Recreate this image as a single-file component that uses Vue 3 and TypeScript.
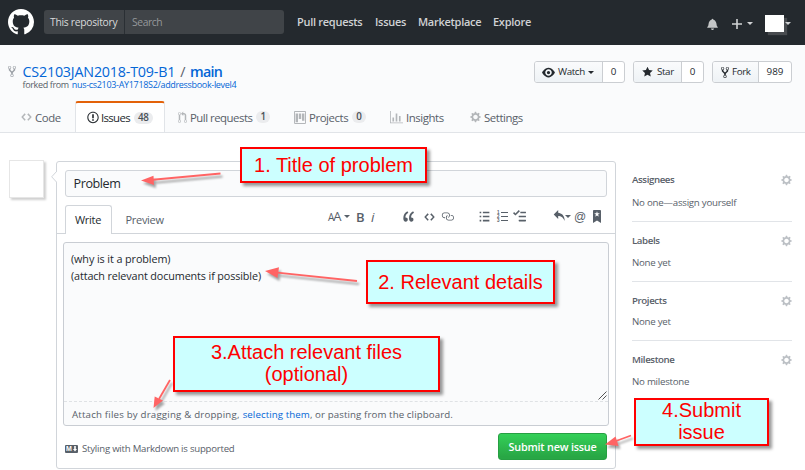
<script setup lang="ts">
interface Icon { w: number; d: string }
const icons: Record<string, Icon> = {
  github: { w: 16, d: 'M8 0C3.58 0 0 3.58 0 8c0 3.54 2.29 6.53 5.47 7.59.4.07.55-.17.55-.38 0-.19-.01-.82-.01-1.49-2.01.37-2.53-.49-2.69-.94-.09-.23-.48-.94-.82-1.13-.28-.15-.68-.52-.01-.53.63-.01 1.08.58 1.23.82.72 1.21 1.87.87 2.33.66.07-.52.28-.87.51-1.07-1.78-.2-3.64-.89-3.64-3.95 0-.87.31-1.59.82-2.15-.08-.2-.36-1.02.08-2.12 0 0 .67-.21 2.2.82.64-.18 1.32-.27 2-.27.68 0 1.36.09 2 .27 1.53-1.04 2.2-.82 2.2-.82.44 1.1.16 1.92.08 2.12.51.56.82 1.27.82 2.15 0 3.07-1.87 3.75-3.65 3.95.29.25.54.73.54 1.48 0 1.07-.01 1.93-.01 2.2 0 .21.15.46.55.38A8.013 8.013 0 0 0 16 8c0-4.42-3.58-8-8-8z' },
  fork: { w: 10, d: 'M8 1a1.993 1.993 0 0 0-1 3.72V6L5 8 3 6V4.72A1.993 1.993 0 0 0 2 1a1.993 1.993 0 0 0-1 3.72V6.5l3 3v1.78A1.993 1.993 0 0 0 5 15a1.993 1.993 0 0 0 1-3.72V9.5l3-3V4.72A1.993 1.993 0 0 0 8 1zM2 4.2C1.34 4.2.8 3.65.8 3c0-.65.55-1.2 1.2-1.2.65 0 1.2.55 1.2 1.2 0 .65-.55 1.2-1.2 1.2zm3 10c-.66 0-1.2-.55-1.2-1.2 0-.65.55-1.2 1.2-1.2.65 0 1.2.55 1.2 1.2 0 .65-.55 1.2-1.2 1.2zm3-10c-.66 0-1.2-.55-1.2-1.2 0-.65.55-1.2 1.2-1.2.65 0 1.2.55 1.2 1.2 0 .65-.55 1.2-1.2 1.2z' },
  code: { w: 14, d: 'M9.5 3L8 4.5 11.5 8 8 11.5 9.5 13 14 8 9.5 3zm-5 0L0 8l4.5 5L6 11.5 2.5 8 6 4.5 4.5 3z' },
  issue: { w: 14, d: 'M7 2.3c3.14 0 5.7 2.56 5.7 5.7s-2.56 5.7-5.7 5.7A5.71 5.71 0 0 1 1.3 8c0-3.14 2.56-5.7 5.7-5.7zM7 1C3.14 1 0 4.14 0 8s3.14 7 7 7 7-3.14 7-7-3.14-7-7-7zm1 3H6v5h2V4zm0 6H6v2h2v-2z' },
  pull: { w: 12, d: 'M11 11.28V5c-.03-.78-.34-1.47-.94-2.06C9.46 2.35 8.78 2.03 8 2H7V0L4 3l3 3V4h1c.27.02.48.11.69.31.21.2.3.42.31.69v6.28A1.993 1.993 0 0 0 10 15a1.993 1.993 0 0 0 1-3.72zm-1 2.92c-.66 0-1.2-.55-1.2-1.2 0-.65.55-1.2 1.2-1.2.65 0 1.2.55 1.2 1.2 0 .65-.55 1.2-1.2 1.2zM4 3c0-1.11-.89-2-2-2a1.993 1.993 0 0 0-1 3.72v6.56A1.993 1.993 0 0 0 2 15a1.993 1.993 0 0 0 1-3.72V4.72c.59-.34 1-.98 1-1.72zm-.8 10c0 .66-.55 1.2-1.2 1.2-.65 0-1.2-.55-1.2-1.2 0-.65.55-1.2 1.2-1.2.65 0 1.2.55 1.2 1.2zM2 4.2C1.34 4.2.8 3.65.8 3c0-.65.55-1.2 1.2-1.2.65 0 1.2.55 1.2 1.2 0 .65-.55 1.2-1.2 1.2z' },
  project: { w: 15, d: 'M10 12h3V3h-3v9zM6 10h3V3H6v7zM2 14h3V3H2v11zM14 0H1a1 1 0 0 0-1 1v14a1 1 0 0 0 1 1h13a1 1 0 0 0 1-1V1a1 1 0 0 0-1-1zM1.2 1.2v13.6h12.6V1.2z' },
  graph: { w: 16, d: 'M16 14v1H0V0h1v14h15zM5 13H3V8h2v5zm4 0H7V3h2v10zm4 0h-2V6h2v7z' },
  gear: { w: 14, d: 'M14 8.77v-1.6l-1.94-.64-.45-1.09.88-1.84-1.13-1.13-1.81.91-1.09-.45-.69-1.92h-1.6l-.63 1.94-1.11.45-1.84-.88-1.13 1.13.91 1.81-.45 1.09L0 7.23v1.59l1.94.64.45 1.09-.88 1.84 1.13 1.13 1.81-.91 1.09.45.69 1.92h1.59l.63-1.94 1.11-.45 1.84.88 1.13-1.13-.92-1.81.47-1.09L14 8.75v.02zM7 11c-1.66 0-3-1.34-3-3s1.34-3 3-3 3 1.34 3 3-1.34 3-3 3z' },
  eye: { w: 16, d: 'M8.06 2C3 2 0 8 0 8s3 6 8.06 6C13 14 16 8 16 8s-3-6-7.94-6zM8 12c-2.2 0-4-1.78-4-4 0-2.2 1.8-4 4-4 2.22 0 4 1.8 4 4 0 2.22-1.78 4-4 4zm2-4c0 1.11-.89 2-2 2-1.11 0-2-.89-2-2 0-1.11.89-2 2-2 1.11 0 2 .89 2 2z' },
  star: { w: 14, d: 'M14 6l-4.9-.64L7 1 4.9 5.36 0 6l3.6 3.26L2.67 14 7 11.67 11.33 14l-.93-4.74z' },
  bell: { w: 14, d: 'M14 12v1H0v-1l.73-.58c.77-.77.81-2.55 1.19-4.42C2.69 3.23 6 2 6 2c0-.55.45-1 1-1s1 .45 1 1c0 0 3.39 1.23 4.16 5 .38 1.88.42 3.66 1.19 4.42l.66.58H14zm-7 4c1.11 0 2-.89 2-2H5c0 1.11.89 2 2 2z' },
  quote: { w: 14, d: 'M6.16 3.5C3.73 5.06 2.55 6.67 2.55 9.36c.16-.05.3-.05.44-.05 1.27 0 2.5.86 2.5 2.41 0 1.61-1.03 2.61-2.5 2.61-1.9 0-2.99-1.52-2.99-4.25 0-3.8 1.75-6.53 5.02-8.42L6.16 3.5zm7 0c-2.43 1.56-3.61 3.17-3.61 5.86.16-.05.3-.05.44-.05 1.27 0 2.5.86 2.5 2.41 0 1.61-1.03 2.61-2.5 2.61-1.89 0-2.98-1.52-2.98-4.25 0-3.8 1.75-6.53 5.02-8.42l1.14 1.84h-.01z' },
  link: { w: 16, d: 'M4 9h1v1H4c-1.5 0-3-1.69-3-3.5S2.55 3 4 3h4c1.45 0 3 1.69 3 3.5 0 1.41-.91 2.72-2 3.25V8.59c.58-.45 1-1.27 1-2.09C10 5.22 8.98 4 8 4H4c-.98 0-2 1.22-2 2.5S3 9 4 9zm9-3h-1v1h1c1 0 2 1.22 2 2.5S13.98 12 13 12H9c-.98 0-2-1.22-2-2.5 0-.83.42-1.64 1-2.09V6.25c-1.09.53-2 1.84-2 3.25C6 11.31 7.55 13 9 13h4c1.45 0 3-1.69 3-3.5S14.5 6 13 6z' },
  list: { w: 12, d: 'M0 2h2v2H0zM4 2h8v2H4zM0 7h2v2H0zM4 7h8v2H4zM0 12h2v2H0zM4 12h8v2H4z' },
  tasks: { w: 16, d: 'M15.41 9H7.59C7 9 7 8.59 7 8c0-.59 0-1 .59-1h7.81c.59 0 .59.41.59 1 0 .59 0 1-.59 1h.01zM9.59 4C9 4 9 3.59 9 3c0-.59 0-1 .59-1h5.81c.59 0 .59.41.59 1 0 .59 0 1-.59 1H9.59zM0 3.91l1.41-1.3L3 4.2 7.09 0 8.5 1.41 3 6.91l-3-3zM7.59 12h7.81c.59 0 .59.41.59 1 0 .59 0 1-.59 1H7.59C7 14 7 13.59 7 13c0-.59 0-1 .59-1z' },
  reply: { w: 14, d: 'M6 3.5c3.92.44 8 3.125 8 10-2.312-5.062-4.75-6-8-6V11L.5 5.5 6 0v3.5z' },
  bookmark: { w: 10, d: 'M9 0H1C.27 0 0 .27 0 1v15l5-3.09L10 16V1c0-.73-.27-1-1-1zm-.78 4.25L6.36 5.61l.72 2.16c.06.22-.02.28-.2.17L5 6.6 3.12 7.94c-.19.11-.25.05-.2-.17l.72-2.16-1.86-1.36c-.17-.16-.14-.23.09-.23l2.3-.03.7-2.16h.25l.7 2.16 2.3.03c.23 0 .27.08.09.23h.01z' },
}
const box = (n: string) => `0 0 ${icons[n].w} 16`

const nav = [
  { t: 'Pull requests', c: 'n1' }, { t: 'Issues', c: 'n2' },
  { t: 'Marketplace', c: 'n3' }, { t: 'Explore', c: 'n4' },
]
const tabs = [
  { t: 'Code', icon: 'code', c: 't1' },
  { t: 'Issues', icon: 'issue', c: 't2 active', n: 48 },
  { t: 'Pull requests', icon: 'pull', c: 't3', n: 1 },
  { t: 'Projects', icon: 'project', c: 't4', n: 0 },
  { t: 'Insights', icon: 'graph', c: 't5' },
  { t: 'Settings', icon: 'gear', c: 't6' },
]
const actions = [
  { t: 'Watch', icon: 'eye', n: 0, c: 'watch', caret: true },
  { t: 'Star', icon: 'star', n: 0, c: 'star', caret: false },
  { t: 'Fork', icon: 'fork', n: 989, c: 'forks', caret: false },
]
const side = [
  { t: 'Assignees', v: 'No one—assign yourself', c: 's1' },
  { t: 'Labels', v: 'None yet', c: 's2' },
  { t: 'Projects', v: 'None yet', c: 's3' },
  { t: 'Milestone', v: 'No milestone', c: 's4' },
]
const arrows = [
  { line: 'M220.5 173.5L150 180', head: '141,180.5 153.5,175.8 154,185' },
  { line: 'M357 281L275 272.3', head: '265,271 279,267.3 277.5,278' },
  { line: 'M170 380L159 399', head: '153.5,408 154.7,396.5 163,400.5' },
  { line: 'M631 435.5L616 441', head: '605,444.5 615.5,436.5 618.5,446' },
]
</script>

<template>
  <div class="page">
    <header class="topbar">
      <svg class="logo" :viewBox="box('github')"><path :d="icons.github.d" /></svg>
      <div class="search"><span class="scope">This repository</span><span class="query">Search</span></div>
      <nav class="nav"><a v-for="n in nav" :key="n.t" :class="n.c">{{ n.t }}</a></nav>
      <div class="user">
        <svg class="bell" :viewBox="box('bell')"><path :d="icons.bell.d" /></svg>
        <svg class="plus" viewBox="0 0 10 10"><path d="M4.2 0h1.6v4.2H10v1.6H5.8V10H4.2V5.8H0V4.2h4.2z" /></svg>
        <i class="caret"></i>
        <span class="avatar-sm"></span>
        <i class="caret"></i>
      </div>
    </header>

    <section class="repohead">
      <div class="titlebar">
        <svg class="repoicon" :viewBox="box('fork')"><path :d="icons.fork.d" /></svg>
        <div class="names">
          <h1><a class="owner">CS2103JAN2018-T09-B1</a><span class="slash">/</span><a class="repo">main</a></h1>
          <p class="forked"><span>forked from</span><a>nus-cs2103-AY1718S2/addressbook-level4</a></p>
        </div>
        <ul class="actions">
          <li v-for="a in actions" :key="a.t" :class="a.c">
            <span class="act">
              <svg :viewBox="box(a.icon)"><path :d="icons[a.icon].d" /></svg><span>{{ a.t }}</span><i v-if="a.caret" class="caret"></i>
            </span>
            <span class="num">{{ a.n }}</span>
          </li>
        </ul>
      </div>
      <nav class="tabs">
        <a v-for="t in tabs" :key="t.t" :class="t.c">
          <svg :viewBox="box(t.icon)"><path fill-rule="evenodd" :d="icons[t.icon].d" /></svg><span class="lbl">{{ t.t }}</span>
          <b v-if="t.n !== undefined">{{ t.n }}</b>
        </a>
      </nav>
    </section>

    <main class="content">
      <div class="avatar"></div>
      <form class="form" @submit.prevent>
        <svg class="notch" viewBox="0 0 6 12"><path d="M6 0L.7 5.8 6 11.6" /></svg>
        <div class="title-input">Problem</div>
        <div class="editor-tabs">
          <span class="write">Write</span><span class="preview">Preview</span>
          <div class="tools">
            <span class="size"><small>A</small>A</span><i class="caret"></i><span class="bold">B</span><span class="ital">i</span>
            <svg class="quote" :viewBox="box('quote')"><path :d="icons.quote.d" /></svg>
            <svg class="codei" :viewBox="box('code')"><path :d="icons.code.d" /></svg>
            <svg class="link" :viewBox="box('link')"><path :d="icons.link.d" /></svg>
            <svg class="list" :viewBox="box('list')"><path :d="icons.list.d" /></svg>
            <span class="numbered"><span v-for="n in 3" :key="n"><em>{{ n }}</em><i></i></span></span>
            <svg class="tasks" :viewBox="box('tasks')"><path :d="icons.tasks.d" /></svg>
            <svg class="reply" :viewBox="box('reply')"><path :d="icons.reply.d" /></svg><i class="caret"></i>
            <span class="at">@</span>
            <svg class="bookmark" :viewBox="box('bookmark')"><path fill-rule="evenodd" :d="icons.bookmark.d" /></svg>
          </div>
        </div>
        <div class="editor">
          <div class="text">
            <p class="l1">(why is it a problem)</p>
            <p class="l2">(attach relevant documents if possible)</p>
            <svg class="grip" viewBox="0 0 9 9"><path d="M.5 8.5l8-8M4.5 8.5l4-4" /></svg>
          </div>
          <div class="attach"><span class="a1">Attach files by dragging &amp; dropping,</span><a>selecting them</a><span class="a2">, or pasting from the clipboard.</span></div>
        </div>
        <div class="bottom">
          <span class="md">M<svg viewBox="0 0 4 6"><path d="M1.2 0h1.6v3H4L2 5.6 0 3h1.2z" /></svg></span>
          <span class="styling">Styling with Markdown is supported</span>
          <button>Submit new issue</button>
        </div>
      </form>
      <aside class="side">
        <section v-for="s in side" :key="s.t" :class="s.c">
          <div class="sh"><strong>{{ s.t }}</strong><svg :viewBox="box('gear')"><path :d="icons.gear.d" /></svg></div>
          <p>{{ s.v }}</p>
        </section>
      </aside>
    </main>

    <svg class="arrows" viewBox="0 0 805 470">
      <g v-for="a in arrows" :key="a.line"><path :d="a.line" /><polygon :points="a.head" /></g>
    </svg>
    <div class="note note1">1. Title of problem</div>
    <div class="note note2">2. Relevant details</div>
    <div class="note note3">3.Attach relevant files<br />(optional)</div>
    <div class="note note4">4.Submit<br />issue</div>
  </div>
</template>

<style>
body { margin: 0; background: #fff; }
</style>
<style scoped>
* { box-sizing: border-box; }
.page { position: relative; width: 805px; height: 470px; overflow: hidden; background: #fff; color: #24292e; font-family: "Open Sans", "Noto Sans", sans-serif; font-size: 11px; white-space: nowrap; }
svg { fill: currentColor; display: block; flex: none; }
h1, p, ul { margin: 0; padding: 0; font-weight: 400; }
.caret { width: 0; height: 0; border: 3px solid transparent; border-top-color: currentColor; border-bottom: 0; flex: none; }

.topbar { height: 45px; background: #24292e; display: flex; align-items: center; padding-left: 8px; color: #d0d2d4; }
.logo { width: 26px; height: 26px; color: #fff; margin-top: -1px; }
.search { width: 240px; height: 24px; margin: -1px 0 0 10px; background: #404448; border-radius: 3px; display: flex; align-items: center; }
.scope { width: 81px; height: 24px; line-height: 25px; padding-left: 6px; border-right: 1px solid #2a2f34; font-size: 10.3px; letter-spacing: -.27px; font-weight: 500; color: #d9dadb; }
.query { padding-left: 7px; font-size: 10.3px; letter-spacing: -.4px; color: #95989b; }
.nav { display: flex; width: 408px; padding-left: 13px; font-weight: 600; line-height: 16px; margin-top: -1px; letter-spacing: -.28px; }
.n1 { width: 78px; } .n2 { width: 43px; } .n3 { width: 75px; }
.user { display: flex; align-items: center; padding-left: 15px; height: 45px; padding-top: 2px; }
.bell { width: 11px; height: 12px; margin-right: 14px; color: #c4c6c7; }
.plus { width: 10px; height: 10px; margin-right: 5px; }
.avatar-sm { width: 19px; height: 17px; background: #fff; margin: 0 1px 0 12px; box-shadow: 3px 3px 1px #484b4f; }

.repohead { height: 88px; background: #fafbfc; border-bottom: 1px solid #e1e4e8; display: flex; flex-direction: column; }
.titlebar { display: flex; height: 57px; padding-left: 8px; }
.repoicon { width: 8px; height: 13px; margin-top: 20px; color: #9a9fa5; }
.names { flex: 1; padding: 16px 0 0 6.5px; }
h1 { display: flex; height: 20px; line-height: 22px; font-size: 14.3px; color: #0366d6; }
.owner { letter-spacing: -.2px; }
.slash { color: #586069; margin: 0 4.5px 0 5px; }
.repo { font-weight: 600; letter-spacing: -.75px; }
.forked { display: flex; gap: 3px; font-size: 9px; line-height: 12px; color: #586069; letter-spacing: -.35px; margin-top: -2px; }
.forked a { color: #0366d6; letter-spacing: -.32px; }
.actions { list-style: none; display: flex; gap: 8px; padding: 16px 13px 0 0; }
.actions li { display: flex; height: 22px; border: 1px solid #cbced2; border-radius: 3px; font-size: 9.8px; font-weight: 500; line-height: 20px; background: #fff; overflow: hidden; }
.act { display: flex; align-items: center; background: linear-gradient(#fafbfc, #eff3f6 90%); border-right: 1px solid #cbced2; letter-spacing: -.38px; }
.num { flex: 1; text-align: center; font-weight: 500; }
.watch { width: 91px; } .watch .act { width: 68px; padding-left: 7px; gap: 3px; } .watch svg { width: 13px; height: 13px; }
.star { width: 71px; } .star .act { width: 48px; padding-left: 8px; gap: 4px; } .star svg { width: 11px; height: 12px; }
.forks { width: 80px; } .forks .act { width: 46px; padding-left: 8px; gap: 3px; } .forks svg { width: 8px; height: 13px; }

.tabs { display: flex; height: 31px; color: #586069; font-size: 11.4px; letter-spacing: -.43px; }
.tabs a { display: flex; align-items: center; gap: 2px; height: 31px; padding-top: 1px; }
.tabs svg { color: #b3b6b9; margin-right: 1px; }
.tabs b { height: 12px; border-radius: 8px; background: #ebecee; padding: 0 4px; line-height: 12px; font-size: 9.8px; font-weight: 600; letter-spacing: -.2px; margin-left: 2px; color: #4b5259; }
.t1 { width: 75px; padding-left: 21px; } .t1 svg { width: 11px; height: 12px; }
.t2 { width: 90px; padding-left: 11px; } .t2 svg { width: 12px; height: 13px; color: #24292e; }
.tabs .t2 svg { margin-right: 0; color: #24292e; }
.t2 .lbl { letter-spacing: -.65px; }
.active { background: #fff; border: 1px solid #e1e4e8; border-top: 2px solid #e36209; border-bottom: 0; border-radius: 3px 3px 0 0; color: #24292e; position: relative; margin-bottom: -1px; }
.tabs .active { height: 31px; padding-top: 0; }
.t3 { width: 129px; padding-left: 13px; } .t3 svg { width: 9px; height: 13px; }
.t3 .lbl { letter-spacing: -.5px; }
.t4 { width: 96px; } .t4 svg { width: 12px; height: 13px; }
.t5 { width: 80px; } .t5 svg { width: 13px; height: 13px; }
.t6 svg { width: 11px; height: 12px; }

.content { display: flex; align-items: flex-start; padding: 27px 0 0 9px; }
.avatar { width: 35px; height: 38px; border: 1px solid #e6e6e6; background: #fff; box-shadow: 2px 2px 2px #d0d0d0; }
.form { position: relative; width: 560px; height: 308px; margin: 1px 0 0 12px; border: 1px solid #d1d5da; border-radius: 3px; padding-top: 8px; }
.notch { position: absolute; left: -6px; top: 9px; width: 6px; height: 12px; fill: #fff; stroke: #d1d5da; stroke-width: 1; }
.title-input { height: 27px; margin: 0 8px; border: 1px solid #d1d5da; border-radius: 3px; background: #fafbfc; padding-left: 7.5px; line-height: 26px; font-size: 12.6px; letter-spacing: -.42px; }
.editor-tabs { display: flex; height: 37px; padding: 8px 8px 0; border-bottom: 1px solid #d1d5da; }
.write { width: 47px; height: 29px; border: 1px solid #d1d5da; border-bottom: 0; border-radius: 3px 3px 0 0; background: #fff; padding-left: 9px; line-height: 28px; letter-spacing: -.3px; }
.preview { width: 53px; padding-left: 13.5px; line-height: 30px; letter-spacing: -.3px; color: #586069; }
.tools { display: flex; align-items: center; height: 23px; margin-left: 163px; color: #586069; }
.size { font: 500 13px/14px "Open Sans", sans-serif; width: 16px; letter-spacing: -1.2px; }
.size small { font-size: 10px; }
.bold { width: 15px; margin-left: 6px; font: 600 13px/16px "Open Sans", sans-serif; }
.ital { width: 32px; font: italic 500 13.5px/16px "Open Sans", sans-serif; }
.quote { width: 12px; height: 13px; margin-right: 9px; }
.codei { width: 11px; height: 12px; margin-right: 6px; }
.link { width: 13px; height: 13px; margin-right: 25px; }
.list { width: 11px; height: 13px; margin-right: 7px; }
.numbered { width: 16px; }
.numbered span { display: flex; align-items: center; height: 4px; gap: 2px; }
.numbered em { font: 600 4.5px/4px "Liberation Sans", sans-serif; width: 2px; }
.numbered i { width: 7px; height: 1.4px; background: currentColor; }
.tasks { width: 13px; height: 13px; margin-right: 27px; }
.reply { width: 12px; height: 13px; margin-right: 0; }
.at { width: 19px; margin-left: 3px; font: 12px/14px "Liberation Sans", sans-serif; }
.bookmark { width: 8px; height: 13px; }
.editor { margin: 8px 6px 0; height: 184px; border: 1px solid #c9cdd3; border-radius: 3px; background: #fafbfc; }
.text { position: relative; height: 159px; border-bottom: 1px dashed #dfe2e5; padding: 7px 7px; font-size: 10.8px; line-height: 17px; }
.l1 { letter-spacing: -.09px; } .l2 { letter-spacing: -.12px; }
.grip { position: absolute; right: 1px; bottom: 1px; width: 9px; height: 9px; fill: none; stroke: #555; stroke-width: 1; }
.attach { display: flex; padding-left: 8px; line-height: 25px; font-size: 9.7px; color: #586069; }
.a1 { letter-spacing: .19px; margin-right: 3px; } .attach a { color: #0366d6; letter-spacing: .09px; } .a2 { letter-spacing: .1px; }
.bottom { display: flex; align-items: center; padding: 7px 8px 0; }
.md { display: flex; align-items: center; justify-content: center; gap: 1px; width: 13px; height: 8px; border-radius: 1px; background: #586069; color: #fff; font: 700 7px/8px "Liberation Sans", sans-serif; margin-top: 4px; }
.md svg { width: 4px; height: 6px; }
.styling { flex: 1; padding: 4px 0 0 4px; font-size: 9.6px; letter-spacing: -.22px; color: #586069; }
button { width: 109px; height: 27px; border: 1px solid #279f43; border-radius: 3px; background: linear-gradient(#34d058, #28a745 90%); color: #fff; padding: 0; font: 600 10.8px/24px "Open Sans", sans-serif; letter-spacing: -.2px; }

.side { width: 160px; margin-left: 16px; font-size: 9.7px; color: #586069; }
.side section { border-bottom: 1px solid #e1e4e8; height: 60px; padding-top: 12px; }
.side .s1 { height: 62px; padding-top: 13px; }
.side .s3 { height: 59px; }
.side .s4 { border: 0; }
.sh { display: flex; align-items: center; justify-content: space-between; height: 14px; }
.sh strong { font-weight: 600; letter-spacing: -.4px; color: #586069; margin-top: -2px; }
.sh svg { width: 11px; height: 12px; color: #bcc0c5; }
.side p { margin-top: 8px; line-height: 13px; letter-spacing: -.25px; }
.side .s1 p { margin-top: 9px; }
.side .s3 p { margin-top: 7px; }

.arrows { position: absolute; left: 0; top: 0; width: 805px; height: 470px; filter: drop-shadow(2px 3px 1px rgba(0, 0, 0, .35)); }
.arrows path { stroke: #ff6464; stroke-width: 1.8; fill: none; }
.arrows polygon { fill: #ff6464; }
.note { position: absolute; background: #cff; border: 2px solid #f00; color: #f00; font: 20px/22px "Liberation Sans", Arial, sans-serif; text-align: center; box-shadow: 3px 3px 3px rgba(0, 0, 0, .4); }
.note1 { left: 240px; top: 147px; width: 187px; height: 36px; line-height: 32px; }
.note2 { left: 366px; top: 260px; width: 189px; height: 44px; line-height: 40px; }
.note3 { left: 173px; top: 336px; width: 267px; height: 56px; padding-top: 3px; }
.note4 { left: 634px; top: 398px; width: 135px; height: 48px; line-height: 21.6px; }
</style>
